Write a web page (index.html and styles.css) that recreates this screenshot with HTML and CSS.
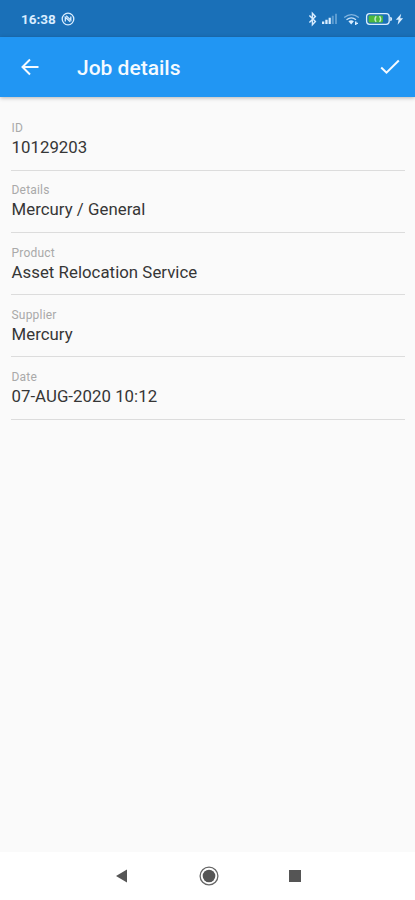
FILE: index.html
```html
<!DOCTYPE html>
<html lang="en">
<head>
<meta charset="utf-8">
<title>Job details</title>
<link rel="stylesheet" href="styles.css">
</head>
<body>
<div class="screen">
  <div class="status">
    <span class="clock">16:38</span>
    <svg class="nfc" width="14" height="14" viewBox="0 0 14 14" fill="none" stroke="currentColor"><circle cx="7" cy="7" r="5.8" stroke-width="1.3"/><path d="M4.3 9.5V5.2l5 4.6M5.2 3.8l4.6 4.3V4.5" stroke-width="1.3"/></svg>
    <svg class="indicators" width="98" height="18" viewBox="0 0 98 18" fill="none" stroke="currentColor">
      <path d="M2.4 5.6l6 6L5.4 14.8V3.2l3 3.2-6 6" stroke-width="1.4"/>
      <g fill="currentColor" stroke="none"><path d="M15 11.5h2.3V14H15zM18.3 9.8h2.3V14h-2.3zM21.6 7.8h2.2V14h-2.2z"/><path d="M24.8 5.7h2V14h-2zM28 3.7h2V14h-2z" opacity=".35"/></g>
      <g stroke-width="1.3"><path d="M37.2 7.5q7.3-5.7 14.6 0" opacity=".55"/><path d="M39.5 9.8q4.9-3.8 9.5 0" opacity=".9"/></g>
      <path d="M41.4 11.2q2.8-2 5.5 0l-2.7 3.2zM48 11.5h1.5v1.2H51v1.2h-1.5V15H48z" fill="currentColor" stroke="none"/>
      <rect x="59.6" y="3.7" width="22.6" height="10.6" rx="3" stroke-width="1.3"/>
      <path d="M83.2 6.8q2 .2 2 2.2t-2 2.2z" fill="currentColor" stroke="none"/>
      <rect x="61.6" y="5.6" width="14.3" height="6.8" rx="1" fill="#4cba3d" stroke="none"/>
      <path d="M69.2 6.2q-2.4 2.8 0 5.6M72.5 6.2q2.4 2.8 0 5.6" stroke="#c5edcd" stroke-width="1.4"/>
      <path d="M94.2 3.8l-5.4 6h2.8l-1 4.9 5.5-6.4h-2.9z" fill="currentColor" stroke="none"/>
    </svg>
  </div>
  <header class="bar">
    <svg class="back" width="20" height="18" viewBox="0 0 20 18" fill="none" stroke="currentColor" stroke-width="2"><path d="M18.5 9H3M10 1.5L2.5 9l7.5 7.5"/></svg>
    <h1>Job details</h1>
    <svg class="check" width="20" height="16" viewBox="0 0 20 16" fill="none" stroke="currentColor" stroke-width="2"><path d="M1.2 8.5l5.3 5.2L18.8 1.5"/></svg>
  </header>
  <main class="fields">
    <div class="field"><span class="label">ID</span><span class="value">10129203</span></div>
    <div class="field"><span class="label">Details</span><span class="value">Mercury / General</span></div>
    <div class="field"><span class="label">Product</span><span class="value">Asset Relocation Service</span></div>
    <div class="field"><span class="label">Supplier</span><span class="value">Mercury</span></div>
    <div class="field"><span class="label">Date</span><span class="value">07-AUG-2020 10:12</span></div>
  </main>
  <nav class="nav">
    <svg width="20" height="20" viewBox="0 0 20 20"><path d="M4 10l11-6.5v13z" fill="#555"/></svg>
    <svg width="20" height="20" viewBox="0 0 20 20"><circle cx="10" cy="10" r="8.9" fill="none" stroke="#666" stroke-width="1.3"/><circle cx="10" cy="10" r="6.3" fill="#555"/></svg>
    <svg width="20" height="20" viewBox="0 0 20 20"><path d="M4 4h12v12H4z" fill="#555"/></svg>
  </nav>
</div>
</body>
</html>
```
FILE: styles.css
```css
* { box-sizing: border-box; }
body { margin: 0; font-family: Roboto, "Liberation Sans", sans-serif; }
.screen { display: flex; flex-direction: column; width: 415px; height: 900px; background: #fafafa; }
.status { display: flex; align-items: center; height: 37px; padding: 0 10px 0 21px; background: #1a70b8; color: #d9edff; }
.clock { width: 35px; font-size: 13.5px; font-weight: 700; line-height: 16px; white-space: nowrap; }
.nfc { margin-left: 5px; }
.indicators { margin-left: auto; }
.bar { display: flex; align-items: center; height: 60px; padding: 0 15px 0 20px; background: #2196f3; color: #f4faff; box-shadow: 0 1px 4px rgba(0, 0, 0, .28); }
h1 { margin: 2px 0 0 37px; font-size: 21px; font-weight: 500; line-height: 28px; }
.check { margin-left: auto; }
.fields { flex: 1; padding: 11px 10px 0 11px; }
.field { display: flex; flex-direction: column; height: 62.3px; padding-top: 12.7px; border-bottom: 1px solid #dcdcdc; }
.field:first-child { height: 62.6px; }
.label { padding-left: .5px; font-size: 12px; line-height: 14px; color: #a9a9a9; letter-spacing: .2px; }
.value { margin-top: 1px; padding-left: .5px; font-size: 16.8px; line-height: 22px; letter-spacing: .04px; color: #363636; }
.nav { display: flex; justify-content: space-between; align-items: center; height: 48px; padding: 0 110px 0 112px; background: #fff; }
```
